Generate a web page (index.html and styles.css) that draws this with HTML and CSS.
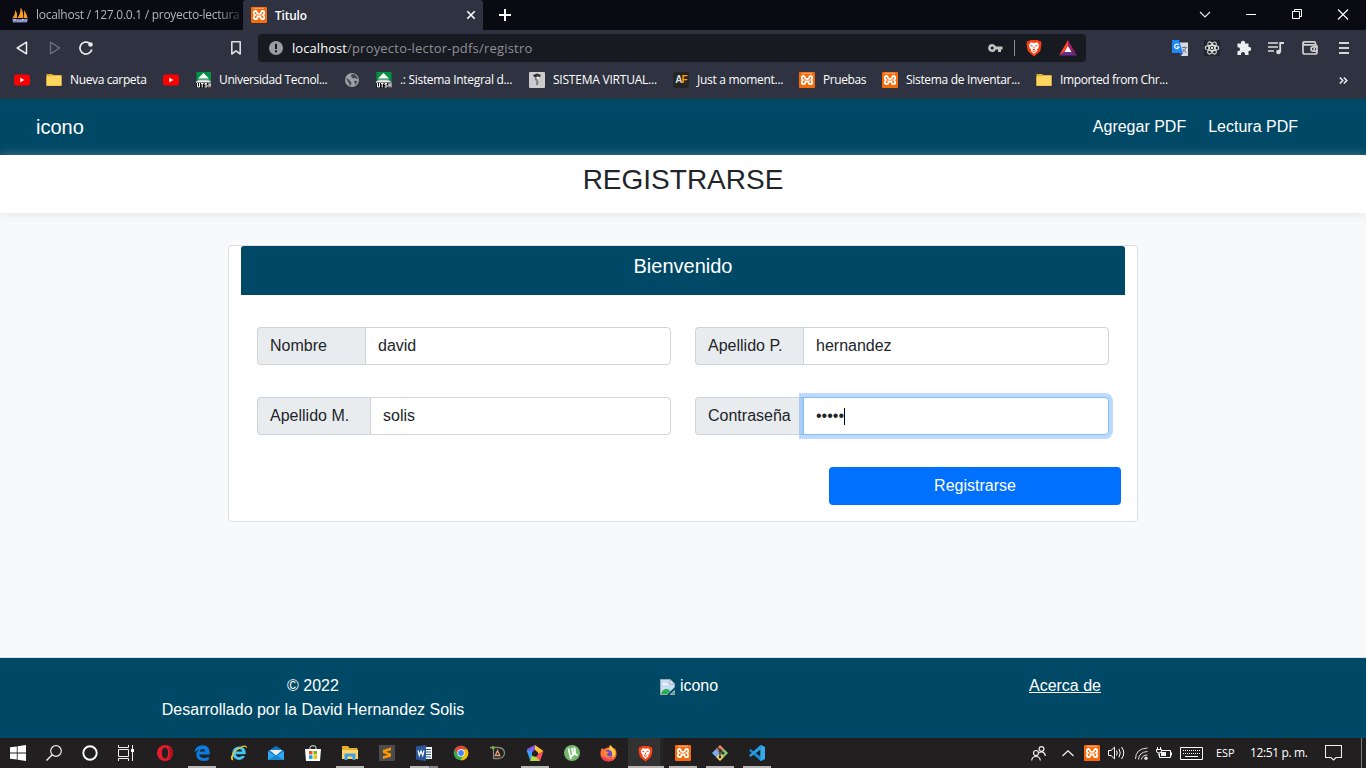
FILE: index.html
```html
<!DOCTYPE html>
<html lang="es">
<head>
<meta charset="utf-8">
<title>Titulo</title>
<link rel="stylesheet" href="styles.css">
</head>
<body>
<svg class="defs" width="0" height="0">
  <symbol id="xampp" viewBox="0 0 16 16"><rect width="16" height="16" rx="1" fill="#f66a0a"/><path d="M8 7.200Q10 7 10.200 5.400 10.400 4 11.600 4 13.200 4 13.200 6 13.200 7.400 12 8 13.200 8.600 13.200 10.200 13.200 12.200 11.500 12.200 10 12.200 9.700 10.700L9.500 9.500H6.500L6.300 10.700Q6 12.200 4.500 12.200 2.800 12.200 2.800 10.200 2.800 8.600 4 8 2.800 7.400 2.800 6 2.800 4 4.400 4 5.600 4 5.800 5.400 6 7 8 7.200Z" fill="none" stroke="#fff" stroke-width="1.8"/><path d="M3 1.300H13" stroke="#ffd1aa" stroke-width=".7"/></symbol>
  <symbol id="yt" viewBox="0 0 16 16"><rect y="2.500" width="16" height="11" rx="2.800" fill="#f00"/><path d="M6.300 5.800V10.200L10.300 8Z" fill="#fff"/></symbol>
  <symbol id="folder" viewBox="0 0 16 16"><path d="M.5 2H6L7.500 3.300H15.500V14H.5Z" fill="#e5ad2e"/><path d="M.5 4.300H6L7.300 3.500H15.500V13.500H.5Z" fill="#ffd75e"/></symbol>
  <symbol id="utsh" viewBox="0 0 16 16"><path d="M.5 0H15.500V11H.5Z" fill="#009245"/><path d="M7.500 1 13 6.500H2Z" fill="#fff"/><path d="M2.500 7.500H12.500L15.500 10.500H0Z" fill="#b8b8b8"/><path d="M0 9.500 5 8.500H10.500L15.500 10V11H0Z" fill="#eee"/><rect x=".5" y="10.500" width="15" height="5.500" fill="#111"/><path d="M1.500 11V15H3.500V11M5 11.500H7.500M6.200 11V15.500M11 11.500H9V13H11V15H8.500M13 11V15.500M15 11V15.500M13 13H15" fill="none" stroke="#fff"/></symbol>
  <symbol id="brave" viewBox="0 0 16 18"><path d="M4 1H12L13 2.200 14.800 2 15.500 5 14.500 11Q14 13 8 17.400 2 13 1.500 11L.5 5 1.200 2 3 2.200Z" fill="#fb3e10"/><path d="M5 3.300 8 4 11 3.300 13.200 6 12.100 9.200 11 10.200 11.200 12 8 14.800 4.800 12 5 10.200 3.900 9.200 2.800 6Z" fill="#fff"/><path d="M4.600 6.500 6.800 7.200M11.400 6.500 9.200 7.200M8 8V9.500M6.500 11 8 10.400 9.500 11M6.800 12.500 8 12 9.200 12.500" fill="none" stroke="#fb3e10" stroke-width="1"/></symbol>
</svg>

<header class="browser">
  <div class="tabs">
    <div class="tab">
      <svg width="16" height="16" viewBox="0 0 16 16"><path d="M.5 11Q3 8 3.500 3 6 7 5 11ZM5.500 11Q9 6 8.500 .5 12 5 11 11ZM11.500 11Q12.500 7 12 3 15 7 15.500 11Z" fill="#f89c26"/><path d="M0 11.500Q8 13 16 11.500L15 15.500H1Z" fill="#6c78af"/><path d="M2 15V12.500H4V14M6 12.500V15M8 12.500V15M10 15V12.500H12V14M14 12.500V15" fill="none" stroke="#d5d9ee" stroke-width=".8"/></svg>
      <span class="tab-text fade">localhost / 127.0.0.1 / proyecto-lectura</span>
    </div>
    <div class="tab active">
      <svg width="16" height="16"><use href="#xampp"/></svg>
      <span class="tab-text">Titulo</span>
      <svg class="close" width="10" height="10" viewBox="0 0 10 10"><path d="M1.300 1.300 8.700 8.700M8.700 1.300 1.300 8.700" stroke="#fff" stroke-width="1.600"/></svg>
    </div>
    <svg class="plus" width="12" height="12" viewBox="0 0 12 12"><path d="M6 0V12M0 6H12" stroke="#fff" stroke-width="2"/></svg>
    <div class="winbtns">
      <svg width="46" height="28" viewBox="0 0 46 28"><path d="M18 11 23 16 28 11" fill="none" stroke="#eee" stroke-width="1.100"/></svg>
      <svg width="46" height="28" viewBox="0 0 46 28"><path d="M18 13.500H28" stroke="#fff"/></svg>
      <svg width="46" height="28" viewBox="0 0 46 28"><path d="M18.500 10.500H25.500V17.500H18.500ZM20.500 10.500V8.500H27.500V15.500H25.500" fill="none" stroke="#fff"/></svg>
      <svg width="46" height="28" viewBox="0 0 46 28"><path d="M18 8.500 28 18.500M28 8.500 18 18.500" stroke="#fff" stroke-width="1.100"/></svg>
    </div>
  </div>

  <div class="toolbar">
    <svg class="back" width="14" height="16" viewBox="0 0 14 16"><path d="M11.500 2.200V13.800L2.200 8Z" fill="none" stroke="#eee" stroke-width="1.500" stroke-linejoin="round"/></svg>
    <svg class="fwd" width="14" height="16" viewBox="0 0 14 16"><path d="M2.500 2.200V13.800L11.500 8Z" fill="none" stroke="#6d717c" stroke-width="1.400" stroke-linejoin="round"/></svg>
    <svg class="reload" width="16" height="16" viewBox="0 0 16 16"><path d="M13.800 9.500A6 6 0 1 1 11.200 3" fill="none" stroke="#eee" stroke-width="1.700"/><circle cx="12.500" cy="4.500" r="2.300" fill="#eee"/></svg>
    <svg class="mark" width="12" height="16" viewBox="0 0 12 16"><path d="M1.800 1.800H10.200V14L6 10.800 1.800 14Z" fill="none" stroke="#ddd" stroke-width="1.600" stroke-linejoin="round"/></svg>
    <div class="address">
      <svg class="info" width="14" height="14" viewBox="0 0 14 14"><circle cx="7" cy="7" r="7" fill="#9a9da3"/><path d="M7 2.800V8M7 9.300V11.300" stroke="#181a21" stroke-width="2"/></svg>
      <span class="url"><b>localhost</b>/proyecto-lector-pdfs/registro</span>
      <svg class="key" width="15" height="10" viewBox="0 0 15 10"><path d="M4.200 1A4 4 0 1 0 7.900 6.500H10V9H13V6.500H14.500V3.500H7.900A4 4 0 0 0 4.200 1ZM4.200 3.500A1.500 1.500 0 1 1 4.200 6.500 1.500 1.500 0 0 1 4.200 3.500Z" fill="#c3c3c3" fill-rule="evenodd"/></svg>
      <i class="sep"></i>
      <svg class="shield" width="16" height="18"><use href="#brave"/></svg>
      <svg class="bat" width="18" height="16" viewBox="0 0 18 16"><path d="M9 0 0 15.500 9 10Z" fill="#ff4724"/><path d="M9 0 18 15.500 9 8Z" fill="#9e1f63"/><path d="M0 15.500H18L9 9Z" fill="#662d91"/><path d="M9 6 12.500 12H5.500Z" fill="#fff"/></svg>
    </div>
    <svg class="ext" width="16" height="16" viewBox="0 0 16 16"><path d="M7 2.500H16V16H9Z" fill="#d8dadf"/><path d="M0 0H7L11 13H0Z" fill="#1e88f5"/><path d="M6.500 4.800A2.200 2.200 0 1 0 7 7H4.800" fill="none" stroke="#fff" stroke-width="1.200"/><path d="M10 7.500H15M12.500 6.500V7.500M14 7.500Q13 11 10.500 12M11 9Q12 11.500 14.500 12.500" fill="none" stroke="#607d8b"/><path d="M8 13H11L9 16Z" fill="#3949ab"/></svg>
    <svg class="ext" width="16" height="16" viewBox="0 0 16 16"><rect width="16" height="16" fill="#22252e"/><g fill="none" stroke="#e2e2e2" stroke-width="1.100"><ellipse cx="8" cy="8" rx="6.800" ry="2.600"/><ellipse cx="8" cy="8" rx="6.800" ry="2.600" transform="rotate(60 8 8)"/><ellipse cx="8" cy="8" rx="6.800" ry="2.600" transform="rotate(120 8 8)"/></g><circle cx="8" cy="8" r="1.200" fill="#eee"/></svg>
    <svg class="ext" width="16" height="16" viewBox="0 0 16 16"><path d="M1.500 3.500H5Q4.500 .7 7 .7 9.500 .7 9 3.500H12.500V7Q15.200 6.500 15.200 9 15.200 11.500 12.500 11V15H9Q9.300 12 7 12 4.700 12 5 15H1.500V11Q4 11.500 4 9.200 4 7 1.500 7.300Z" fill="#eee"/></svg>
    <svg class="ext" width="16" height="16" viewBox="0 0 16 16"><path d="M0 3H10M0 7H10M0 11H6" stroke="#ddd" stroke-width="1.700"/><circle cx="10.500" cy="12" r="2.300" fill="#ddd"/><path d="M12.200 12V3H16" fill="none" stroke="#ddd" stroke-width="1.800"/></svg>
    <svg class="ext wallet" width="16" height="16" viewBox="0 0 16 16"><path d="M1 3V12.500Q1 14 3 14H13Q15 14 15 12.500V6.500Q15 4.800 13.500 4.800H3Q1 4.800 1 3 1 1.800 3 1.800H12.500Q13.500 1.800 13.500 4.500M15 6.800H11.500Q9 6.800 9 9 9 11.200 11.500 11.200H15" fill="none" stroke="#d2d2d2" stroke-width="1.700"/><circle cx="12.300" cy="9" r="1.100" fill="#ddd"/></svg>
    <svg class="menu" width="10" height="12" viewBox="0 0 10 12"><path d="M0 1H10M0 6H10M0 11H10" stroke="#d5d5d5" stroke-width="1.800"/></svg>
  </div>

  <nav class="bookmarks">
    <div class="bm w32"><svg width="16" height="16"><use href="#yt"/></svg></div>
    <div class="bm w117"><svg width="16" height="16"><use href="#folder"/></svg><span>Nueva carpeta</span></div>
    <div class="bm w33"><svg width="16" height="16"><use href="#yt"/></svg></div>
    <div class="bm w148"><svg width="15" height="16" viewBox="0 0 15 16"><use href="#utsh" width="16" height="16"/></svg><span>Universidad Tecnol...</span></div>
    <div class="bm w32"><svg width="16" height="16" viewBox="0 0 16 16"><circle cx="8" cy="8" r="7" fill="#9ea1a8"/><path d="M2 6Q5 7 6 9 8 9.500 7 13L5.500 14Q6 11 4 10ZM8 2Q6 4 8 5.500 9 7 11 6L14 7.500 13 5 11 2.500ZM10 9Q12 8.500 13.500 9.500L11 13Q11 11 10 9Z" fill="#434752"/></svg></div>
    <div class="bm w153"><svg width="16" height="16"><use href="#utsh"/></svg><span class="t3">.: Sistema Integral d...</span></div>
    <div class="bm w144"><svg width="16" height="16" viewBox="0 0 16 16"><rect width="16" height="16" rx="1" fill="#ccc"/><path d="M4 3 8 1.500 12 3 11 5H5Z" fill="#333"/><path d="M6 5Q5 8 7.500 9L7 13H9L9.500 9 8 8 10.500 5Z" fill="#777"/><circle cx="8.800" cy="5.800" r="1.400" fill="#eee"/></svg><span class="t4">SISTEMA VIRTUAL...</span></div>
    <div class="bm w126"><span class="af">A<b>F</b></span><span class="t5">Just a moment...</span></div>
    <div class="bm w83"><svg width="16" height="16"><use href="#xampp"/></svg><span class="t6">Pruebas</span></div>
    <div class="bm w154"><svg width="16" height="16"><use href="#xampp"/></svg><span class="t3">Sistema de Inventar...</span></div>
    <div class="bm"><svg width="16" height="16"><use href="#folder"/></svg><span>Imported from Chr...</span></div>
    <svg class="more" width="9" height="7" viewBox="0 0 9 7"><path d="M.8 .5 3.800 3.500 .8 6.500M4.800 .5 7.800 3.500 4.800 6.500" fill="none" stroke="#eee" stroke-width="1.500"/></svg>
  </nav>
</header>

<div class="page">
  <nav class="navbar"><a class="brand">icono</a><a>Agregar PDF</a><a>Lectura PDF</a></nav>
  <div class="title"><h1>REGISTRARSE</h1></div>
  <main>
    <section class="card">
      <h2>Bienvenido</h2>
      <form class="grid">
        <div class="group"><label class="lbl">Nombre</label><div class="field">david</div></div>
        <div class="group"><label class="lbl">Apellido P.</label><div class="field">hernandez</div></div>
        <div class="group"><label class="lbl wide">Apellido M.</label><div class="field">solis</div></div>
        <div class="group"><label class="lbl">Contraseña</label><div class="field focus"><span>•••••</span><i class="caret"></i></div></div>
      </form>
      <button class="submit">Registrarse</button>
    </section>
  </main>
  <footer>
    <div>© 2022<br>Desarrollado por la David Hernandez Solis</div>
    <div class="mid"><svg class="broken" width="16" height="16" viewBox="0 0 16 16"><path d="M.5 .5H10L14.500 5V15.500H.5Z" fill="#c7dbf7" stroke="#a3a9b0"/><path d="M2 6Q3 3.500 5 4.500 7 3.500 8 6Z" fill="#fff"/><path d="M1 15Q2 10.500 6 10 9 9.500 10 12L7 15Z" fill="#22b14c"/><path d="M10 .5V5H14.500Z" fill="#fff" stroke="#a3a9b0"/><path d="M16 8.500 8 16" stroke="#004966" stroke-width="2"/><path d="M11.500 15H14V12.500Z" fill="#22b14c"/></svg>icono</div>
    <div><a class="about">Acerca de</a></div>
  </footer>
</div>

<div class="taskbar">
  <div class="sys"><svg width="16" height="16" viewBox="0 0 16 16"><path d="M0 2.300 6.800 1.400V7.600H0ZM7.600 1.200 16 0V7.600H7.600ZM0 8.400H6.800V14.600L0 13.700ZM7.600 8.400H16V16L7.600 14.800Z" fill="#fff"/></svg></div>
  <div class="sys"><svg width="16" height="16" viewBox="0 0 16 16"><circle cx="10" cy="6" r="5.300" fill="none" stroke="#eee" stroke-width="1.200"/><path d="M6.200 9.800 .5 15.500" stroke="#eee" stroke-width="1.400"/></svg></div>
  <div class="sys"><svg width="16" height="16" viewBox="0 0 16 16"><circle cx="8" cy="8" r="6.700" fill="none" stroke="#fff" stroke-width="1.900"/></svg></div>
  <div class="sys"><svg width="16" height="16" viewBox="0 0 16 16"><path d="M.5 0V2.500H10.500V0M.5 16V13.500H10.500V16M.5 4.500H10.500V11.500H.5ZM14.500 0V16" fill="none" stroke="#eee"/><rect x="13" y="4" width="3" height="3" fill="#fff"/></svg></div>
  <i class="gap"></i>
  <div class="app"><svg width="16" height="16" viewBox="0 0 16 16"><circle cx="8" cy="8" r="8" fill="#e51c2b"/><ellipse cx="8" cy="8" rx="3.200" ry="5.600" fill="#242021"/><path d="M11 2.500Q16 8 11 13.500 16 12 16 8T11 2.500Z" fill="#a90f1d"/></svg></div>
  <div class="app open"><svg width="16" height="16" viewBox="0 0 16 16"><path d="M.5 7.200Q1.500 .4 8.500 .3 15.700 .5 15.700 7.500V9.600H5.200Q5.400 13 10 13 12.500 13 14.700 11.800V15Q12.500 16 9.500 16 2.300 15.700 2.300 9.700 2.300 6.300 5.500 4.400 2.500 4.800 .5 7.200ZM5.500 6.600H11.200Q11 4.100 8.600 4.100 6.200 4.100 5.500 6.600Z" fill="#0a7ce0" fill-rule="evenodd"/></svg></div>
  <div class="app"><svg width="18" height="16" viewBox="0 0 18 16"><path d="M9 1.500A6.700 6.700 0 1 0 15 11H11.500Q9 13 6.500 11 5.800 10 5.900 9.300H15.700Q16 1.500 9 1.500ZM6 6.500Q7 4.200 9.300 4.200 12 4.300 12.200 6.500Z" fill="#43c5f5" fill-rule="evenodd"/><path d="M3.500 15.500Q-1 15 2 9.500 5 4 11 1.500 17-1 17 3.500 15-.5 8 4.500 1 10 3.500 15.500Z" fill="#f7c52b"/></svg></div>
  <div class="app"><svg width="16" height="14" viewBox="0 0 16 14"><path d="M0 5 8 0 16 5V14H0Z" fill="#0c75c9"/><path d="M1.500 4H14.500L8 9.500Z" fill="#efefef"/><path d="M0 5 8 10.500 16 5V14H0Z" fill="#35a7ed"/><path d="M0 14 8 9 16 14Z" fill="#1686d5"/></svg></div>
  <div class="app"><svg width="16" height="16" viewBox="0 0 16 16"><path d="M5 4V2.500Q5 .7 8 .7T11 2.500V4" fill="none" stroke="#eee"/><path d="M0 4H16L15 16H1Z" fill="#fff"/><path d="M4 6H7.500V9.500H4Z" fill="#f25022"/><path d="M8.500 6H12V9.500H8.500Z" fill="#7fba00"/><path d="M4 10.300H7.500V13.800H4Z" fill="#00a4ef"/><path d="M8.500 10.300H12V13.800H8.500Z" fill="#ffb900"/></svg></div>
  <div class="app open"><svg width="16" height="14" viewBox="0 0 16 14"><path d="M0 0H6L7.500 2H15.500V13H0Z" fill="#e8ae2b"/><path d="M0 4H16V13H0Z" fill="#ffd669"/><path d="M2.500 7.500H13.500V14H10.500V10.500H5.500V14H2.500Z" fill="#3f9fe8"/></svg></div>
  <div class="app"><svg width="16" height="16" viewBox="0 0 16 16"><rect width="16" height="16" rx="1" fill="#4c4c4c"/><path d="M12 2.500V5.300L7 6.800 12 8.500V11.500L4 14V11.200L9 9.700 4 8V5Z" fill="#ff9800"/></svg></div>
  <div class="app word"><svg width="16" height="16" viewBox="0 0 16 16"><path d="M8 2H16V14H8Z" fill="#fff"/><path d="M10 4.500H15M10 7H15M10 9.500H15M10 12H15" stroke="#2b5797"/><path d="M0 1.500 10 0V16L0 14.500Z" fill="#2b579a"/><path d="M2 5.500 3.300 10.500 5 6 6.700 10.500 8 5.500" fill="none" stroke="#fff" stroke-width="1.200"/></svg></div>
  <div class="app"><svg width="16" height="16" viewBox="0 0 16 16"><circle cx="8" cy="8" r="7.300" fill="#34a853"/><path d="M1.700 4.300A7.300 7.300 0 0 1 14.300 4.400H8L5 10Z" fill="#ea4335"/><path d="M14.300 4.400A7.300 7.300 0 0 1 7.500 15.300L11 10 8 4.400Z" fill="#fbbc05"/><circle cx="8" cy="8" r="3.700" fill="#fff"/><circle cx="8" cy="8" r="2.900" fill="#4285f4"/></svg></div>
  <div class="app"><svg width="16" height="14" viewBox="0 0 16 14"><path d="M0 1.500H8Q14.500 2 14.500 7T8 12.500H3.500M3.500 0V13" fill="none" stroke="#858585" stroke-width="1.300"/><circle cx="3" cy="1.800" r="1.600" fill="#69be28"/><path d="M7.500 4.500 9.800 9.500H5.300Z" fill="none" stroke="#f0a070" stroke-width="1.300"/></svg></div>
  <div class="app open"><svg width="18" height="16" viewBox="0 0 18 16"><path d="M9 0 1 4 5 9 9 5Z" fill="#8758ee"/><path d="M9 0 17.500 6 12.500 9 9 5Z" fill="#ffc22d"/><path d="M17.500 6 14 16 8 13 12.500 9Z" fill="#ff5064"/><path d="M14 16H4L5 10 10 12Z" fill="#b2dc3d"/><path d="M4 15 .5 5 6 6 6 11Z" fill="#36a4f7"/><path d="M9 5 12 7.500 11 11.300H7L6 7.500Z" fill="#292020"/></svg></div>
  <div class="app"><svg width="16" height="16" viewBox="0 0 16 16"><circle cx="8" cy="8" r="8" fill="#75b86b"/><path d="M4.500 3.500 5.800 9.500Q6.300 11 8 10.800 9.500 10.500 9 8.500L8 3M9 9Q11.500 9.300 11 6.500L10.400 2.500M11 8.500Q12 10.500 13.500 9.500M6.200 10.500 7 14" fill="none" stroke="#fff" stroke-width="1.800"/></svg></div>
  <div class="app"><svg width="17" height="17" viewBox="0 0 17 17"><path d="M2 3 4 4.500Q6 2 9 2.500L10 0Q12 3 14 4L15 3Q17 7 16.500 10 15 16.500 8.500 16.500T.5 10Q.3 5 2 3Z" fill="#ff7139"/><path d="M10 0Q15 4 15.500 8 15 12 11 12L9 5Z" fill="#ffd33a"/><circle cx="8.300" cy="9" r="4" fill="#7548bd"/><path d="M4 5Q6 7 9 7L6.500 9.500Q8 12 11.500 11 9 14 5.500 12 3 10 4 5Z" fill="#ff8b32"/><path d="M1 11Q3 16.500 9 16.300 13 16 15 13 10 16 5 13Z" fill="#f52f64"/></svg></div>
  <div class="app active-app"><svg width="15" height="17"><use href="#brave"/></svg></div>
  <div class="app open"><svg width="16" height="16"><use href="#xampp"/></svg></div>
  <div class="app open"><svg width="16" height="16" viewBox="0 0 16 16"><path d="M8 0 12 4 8 8 4 4Z" fill="#f78364"/><path d="M4 4 8 8 4 12 0 8Z" fill="#77a9f4"/><path d="M12 4 16 8 12 12 8 8Z" fill="#8ccb75"/><path d="M8 8 12 12 8 16 4 12Z" fill="#ffe26c"/><path d="M5 2 11 8M8 5V12" stroke="#333" stroke-width="1.300"/><circle cx="8" cy="5" r="1.500" fill="#333"/><circle cx="11" cy="8" r="1.500" fill="#333"/><circle cx="8" cy="12" r="1.500" fill="#333"/></svg></div>
  <div class="app open"><svg width="16" height="16" viewBox="0 0 16 16"><path d="M11.500 0 16 2V14L11.500 16 0 5.500 1.500 4 11.500 11.500Z" fill="#168bd2"/><path d="M11.500 0V4.500L1.500 12 0 10.500Z" fill="#2a9fe6"/><path d="M11.500 0 16 2V14L11.500 16Z" fill="#35a9ec"/></svg></div>
  <div class="tray">
    <svg class="people" width="15" height="15" viewBox="0 0 15 15"><g fill="none" stroke="#eee" stroke-width="1.200"><circle cx="5" cy="7" r="2.500"/><path d="M.7 14.500Q1 10.500 5 10.500T9.300 14.500"/><circle cx="10.500" cy="3" r="2.400"/><path d="M8 6.500Q13.500 4.500 14.400 10"/></g></svg>
    <svg class="chev" width="12" height="7" viewBox="0 0 12 7"><path d="M.5 6 6 .8 11.500 6" fill="none" stroke="#eee" stroke-width="1.300"/></svg>
    <svg class="tx" width="16" height="16"><use href="#xampp"/></svg>
    <svg class="vol" width="17" height="14" viewBox="0 0 17 14"><g fill="none" stroke="#fff"><path d="M.5 4.500H3L6.500 1.200V12.800L3 9.500H.5ZM8.500 4.500Q10 7 8.500 9.500M11 2.800Q13.500 7 11 11.200M13.500 1Q18 7 13.500 13"/></g></svg>
    <svg class="wifi" width="13" height="13" viewBox="0 0 13 13"><g fill="none" stroke="#ddd"><path d="M.5 12Q.5 1.500 12.500 1M3.500 12.500Q4 5 12.500 4.500M6.500 12.500Q7 8 12.500 8"/></g><circle cx="11" cy="11.300" r="1.700" fill="#ddd"/></svg>
    <svg class="batt" width="16" height="12" viewBox="0 0 16 12"><path d="M5.500 3.500H14.500V10.500H3.500V7M15.500 5.500V8.500M1.500 0V2.500M4.500 0V2.500M.5 2.500H5.500V4Q5.500 6 3 6T.5 4ZM3 6V9" fill="none" stroke="#fff"/><path d="M5 5H10V9H5Z" fill="#eee"/></svg>
    <svg class="kbd" width="23" height="13" viewBox="0 0 23 13"><path d="M.5 .5H22.500V12.500H.5Z" fill="none" stroke="#fff"/><path d="M3 3.500H20M3 6.500H20" stroke="#fff" stroke-dasharray="1 1"/><path d="M5 9.500H18" stroke="#fff"/></svg>
    <span class="lang">ESP</span><span class="clock">12:51 p. m.</span>
    <svg class="note" width="17" height="16" viewBox="0 0 17 16"><path d="M.5 .5H16.500V12.500H11L8.500 15 6 12.500H.5Z" fill="none" stroke="#eee" stroke-width="1.100"/></svg>
    <i class="desk"></i>
  </div>
</div>
</body>
</html>
```
FILE: styles.css
```css
* { box-sizing: border-box; }
body { margin: 0; width: 1366px; height: 768px; overflow: hidden; display: flex; flex-direction: column; font-family: "Liberation Sans", Arial, sans-serif; }
svg { display: block; flex: none; }
.defs { position: absolute; }

.browser { height: 99px; background: #2f3341; color: #fff; font: 12px/16px "Open Sans", "Noto Sans", sans-serif; }
.tabs { height: 30px; background: #090a12; display: flex; align-items: center; }
.tab { height: 30px; width: 243px; padding-left: 12px; display: flex; align-items: center; gap: 8px; color: #b4b6bb; }
.tab-text { white-space: nowrap; font-size: 12px; letter-spacing: -.13px; }
.fade { width: 206px; letter-spacing: -.27px; mask-image: linear-gradient(90deg, #000 88%, rgba(0, 0, 0, .15)); }
.tab.active { width: 240px; padding: 0 7px 0 8px; background: #2f3341; color: #fff; font-weight: 600; border-radius: 3px 3px 0 0; }
.active .tab-text { font-size: 11.800px; }
.close { margin-left: auto; }
.plus { margin-left: 16px; }
.winbtns { display: flex; margin-left: auto; }

.toolbar { height: 36px; display: flex; align-items: center; }
.back { margin-left: 15px; }
.fwd { margin-left: 19px; }
.reload { margin-left: 16px; }
.mark { margin-left: 136px; }
.address { width: 828px; height: 28px; margin-left: 16px; flex: none; background: #181a21; border-radius: 4px; display: flex; align-items: center; padding-left: 11px; }
.url { margin-left: 9px; width: 696px; font-size: 13px; color: #8d9095; letter-spacing: .2px; }
.url b { color: #fff; font-weight: 400; letter-spacing: .06px; }
.sep { width: 1px; height: 16px; background: #8b8d91; margin-left: 11px; }
.shield { margin-left: 11px; }
.bat { margin-left: 17px; }
.ext { margin-right: 16px; }
.address + .ext { margin-left: 86px; }
.wallet { margin-left: 2px; }
.menu { margin-left: 5px; }

.bookmarks { height: 28px; padding-left: 14px; display: flex; align-items: center; }
.bm { display: flex; align-items: center; gap: 8px; flex: none; white-space: nowrap; font-size: 12px; letter-spacing: -.37px; }
.t3 { letter-spacing: -.31px; }
.t4 { letter-spacing: -.22px; }
.t5 { letter-spacing: -.29px; }
.t6 { letter-spacing: -.4px; }
.w32 { width: 32px; }
.w33 { width: 33px; }
.w117 { width: 117px; }
.w148 { width: 148px; }
.w153 { width: 153px; }
.w144 { width: 144px; }
.w126 { width: 126px; }
.w83 { width: 83px; }
.w154 { width: 154px; }
.af { width: 16px; height: 16px; background: #252525; border-radius: 3px; font: bold 10px/16px "Liberation Sans", sans-serif; letter-spacing: -1px; text-align: center; color: #ddd; }
.af b { color: #ff9d00; }
.more { margin-left: auto; margin-right: 18px; }

.page { height: 639px; background: #f8f9fa; display: flex; flex-direction: column; color: #212529; font-size: 16px; line-height: 24px; }
.navbar { height: 56px; background: #004966; color: #fff; display: flex; align-items: center; padding: 0 68px 0 36px; }
.navbar a + a { margin-left: 22px; }
.navbar .brand { font-size: 20px; margin-right: auto; }
.title { height: 58px; background: #fff; box-shadow: 0 0 10px rgba(190, 190, 190, .4); display: flex; justify-content: center; z-index: 1; }
h1 { margin: 8px 0 0; font-size: 28px; line-height: 34px; font-weight: 400; }
main { flex: 1; padding-top: 32px; display: flex; justify-content: center; align-items: flex-start; }
.card { width: 910px; height: 277px; background: #fff; border: 1px solid #dfdfdf; border-radius: 4px; padding: 0 12px; }
h2 { margin: 0; height: 49px; padding-top: 8px; background: #004966; color: #fff; border-radius: 3px 3px 0 0; text-align: center; font-size: 20px; line-height: 24px; font-weight: 400; }
.grid { display: grid; grid-template-columns: 414px 414px; gap: 32px 24px; padding: 32px 16px; margin: 0; }
.group { display: flex; height: 38px; }
.lbl { width: 108px; background: #e9ecef; border: 1px solid #ced4da; border-right: 0; border-radius: 4px 0 0 4px; padding: 6px 12px; flex: none; }
.wide { width: 113px; }
.field { flex: 1; border: 1px solid #ced4da; border-radius: 0 4px 4px 0; padding: 6px 12px; background: #fff; display: flex; align-items: center; }
.focus { border-color: #80bdff; box-shadow: 0 0 0 4px rgba(0, 123, 255, .27); }
.caret { width: 1px; height: 17px; background: #000; }
.submit { display: block; width: 292px; height: 38px; margin-left: 588px; border: 0; border-radius: 4px; background: #0070ff; color: #fff; font: 16px/24px "Liberation Sans", Arial, sans-serif; }
footer { height: 81px; border-top: 1px solid #dee2e6; background: #004966; color: #fff; padding: 16px 0 0 118px; display: grid; grid-template-columns: 390px 362px 390px; text-align: center; }
.mid { display: flex; justify-content: center; gap: 4px; }
.broken { margin-top: 5px; }
.about { text-decoration: underline; }

.taskbar { height: 30px; background: #211f20; display: flex; color: #fff; }
.sys, .app { height: 30px; display: flex; align-items: center; justify-content: center; flex: none; }
.sys { width: 36px; }
.gap { width: 2px; }
.app { width: 37px; }
.open { background: linear-gradient(#b9b5b5, #b9b5b5) 50% 100% / 28px 2px no-repeat; }
.word { background: linear-gradient(90deg, #b9b5b5 19px, #555 19px, #858282 20px) 50% 100% / 28px 2px no-repeat; }
.active-app { background: linear-gradient(#b9b5b5, #b9b5b5) 1px 100% / 36px 2px no-repeat, linear-gradient(90deg, transparent 1px, #323232 1px, #323232 33px, #272627 33px, #272627 36px, transparent 36px); }
.tray { margin-left: auto; display: flex; align-items: center; font: 12px/16px "Open Sans", "Noto Sans", sans-serif; }
.people { margin-right: 1px; }
.chev { margin-left: 15px; }
.tx { margin-left: 10px; }
.vol { margin-left: 8px; }
.wifi { margin-left: 10px; }
.batt { margin-left: 8px; }
.kbd { margin-left: 8px; }
.lang { margin-left: 13px; width: 19px; font-size: 11px; letter-spacing: -.1px; }
.clock { margin-left: 15px; width: 58px; letter-spacing: -.38px; white-space: nowrap; }
.note { margin-left: 17px; margin-right: 19px; }
.desk { width: 1px; height: 30px; background: #777; margin-right: 4px; }
```
